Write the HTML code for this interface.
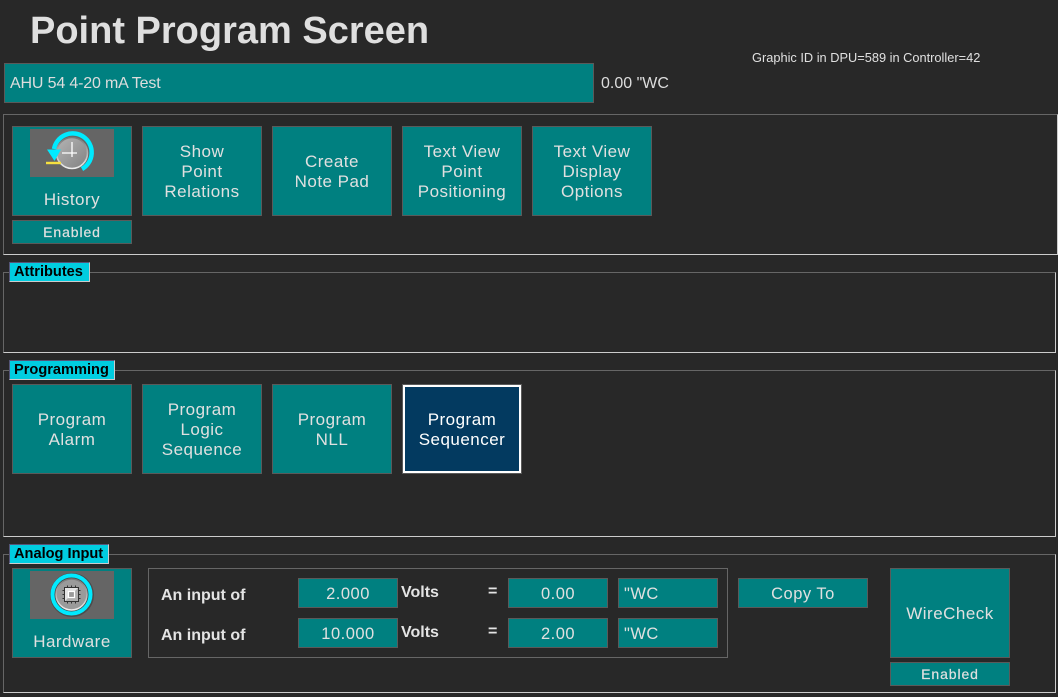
<!DOCTYPE html>
<html><head><meta charset="utf-8"><style>
html,body{margin:0;padding:0;background:#282828;width:1058px;height:697px;overflow:hidden}
body{position:relative;font-family:"Liberation Sans",sans-serif;color:#e0e0e0}
.a{position:absolute;box-sizing:border-box}
.g{border:1px solid #666;border-right-color:#ccc;border-bottom-color:#ccc}
.b{position:absolute;box-sizing:border-box;background:#008080;border:1px solid #5a5a5a;display:flex;align-items:center;justify-content:center;text-align:center;font-size:17px;line-height:20px;letter-spacing:.48px;color:#e0e0e0;padding-top:1px}
.l{position:absolute;box-sizing:border-box;background:#00cde0;border:1px solid #557;border-right-color:#ccc;border-bottom-color:#ccc;color:#000;font-weight:bold;font-size:14.6px;line-height:19px;height:20px;padding-left:4px;white-space:nowrap}
.t{position:absolute;font-weight:bold;font-size:16px;line-height:18px;color:#e4e4e4;white-space:nowrap}
.f{font-size:16.5px;letter-spacing:.5px}
.e{font-size:14px;letter-spacing:.9px;font-weight:normal;padding-top:0;-webkit-text-stroke:.2px #e0e0e0}
</style></head><body>
<div class="a" style="left:30px;top:10px;font-size:38px;line-height:42px;font-weight:bold;color:#dfdfdf;white-space:nowrap">Point Program Screen</div>
<div class="a" style="left:752px;top:50px;font-size:12.8px;line-height:15px;color:#e0e0e0;white-space:nowrap">Graphic ID in DPU=589 in Controller=42</div>
<div class="a" style="left:4px;top:63px;width:590px;height:40px;background:#008080;border:1px solid #5a5a5a;font-size:16px;line-height:40px;letter-spacing:-.16px;padding-left:5px;color:#ddd;white-space:nowrap">AHU 54 4-20 mA Test</div>
<div class="a" style="left:601px;top:74px;font-size:16px;line-height:20px;white-space:nowrap;color:#ddd">0.00 "WC</div>

<div class="a g" style="left:3px;top:114px;width:1055px;height:141px"></div>
<div class="a g" style="left:3px;top:272px;width:1053px;height:81px"></div>
<div class="a g" style="left:3px;top:370px;width:1053px;height:167px"></div>
<div class="a g" style="left:3px;top:554px;width:1053px;height:139px"></div>

<div class="b" style="left:12px;top:126px;width:120px;height:90px;align-items:flex-end;padding-bottom:5px">History</div>
<div class="a" style="left:30px;top:129px;width:84px;height:48px;background:#656565"></div>
<svg class="a" style="left:30px;top:129px" width="84" height="48" viewBox="0 0 84 48">
<defs>
<linearGradient id="m" x1="0" y1="0" x2="1" y2="1"><stop offset="0" stop-color="#b4b4b4"/><stop offset="1" stop-color="#828282"/></linearGradient>
<linearGradient id="r" x1="0" y1="0" x2="0" y2="1"><stop offset="0" stop-color="#777"/><stop offset="1" stop-color="#eee"/></linearGradient>
</defs>
<circle cx="42" cy="24" r="15.500" fill="url(#m)" stroke="url(#r)" stroke-width="1.600"/>
<path d="M24 20 A19 19 0 1 1 52 40" fill="none" stroke="#00eaff" stroke-width="4.500"/>
<path d="M17 20.500 L31 20.500 L24.500 32 Z" fill="#00eaff"/>
<path d="M16 34 H31" stroke="#f5e040" stroke-width="2.400"/>
<path d="M42 13 V28 M32 24 H47" stroke="#fff" stroke-width="1.300"/>
</svg>
<div class="b e" style="left:12px;top:220px;width:120px;height:24px">Enabled</div>
<div class="b" style="left:142px;top:126px;width:120px;height:90px">Show<br>Point<br>Relations</div>
<div class="b" style="left:272px;top:126px;width:120px;height:90px">Create<br>Note Pad</div>
<div class="b" style="left:402px;top:126px;width:120px;height:90px">Text View<br>Point<br>Positioning</div>
<div class="b" style="left:532px;top:126px;width:120px;height:90px">Text View<br>Display<br>Options</div>

<div class="l" style="left:9px;top:262px;width:81px">Attributes</div>
<div class="l" style="left:9px;top:360px;width:106px">Programming</div>
<div class="b" style="left:12px;top:384px;width:120px;height:90px">Program<br>Alarm</div>
<div class="b" style="left:142px;top:384px;width:120px;height:90px">Program<br>Logic<br>Sequence</div>
<div class="b" style="left:272px;top:384px;width:120px;height:90px">Program<br>NLL</div>
<div class="b" style="left:402px;top:384px;width:120px;height:90px;background:#033a60;border:3px solid #fff;outline:1px solid #5a5a5a;outline-offset:-1px;color:#fff">Program<br>Sequencer</div>

<div class="l" style="left:9px;top:544px;width:100px">Analog Input</div>
<div class="b" style="left:12px;top:568px;width:120px;height:90px;align-items:flex-end;padding-bottom:5px">Hardware</div>
<div class="a" style="left:30px;top:571px;width:84px;height:48px;background:#656565"></div>
<svg class="a" style="left:30px;top:571px" width="84" height="48" viewBox="0 0 84 48">
<circle cx="42" cy="24" r="22" fill="#4c4c4c"/>
<circle cx="41.500" cy="23.500" r="19" fill="#444" stroke="#00eaff" stroke-width="4"/>
<circle cx="41.500" cy="23.500" r="15.500" fill="#9a9a9a" stroke="url(#r)" stroke-width="1.500"/>
<path d="M32.500 19.500H50.500M32.500 23.500H50.500M32.500 27.500H50.500M37.500 14.500V32.500M41.500 14.500V32.500M45.500 14.500V32.500" stroke="#333" stroke-width="1"/>
<rect x="34.500" y="16.500" width="14" height="14" fill="#e4e4e4" stroke="#333" stroke-width="1"/>
<path d="M35 30 L48 17 V30 Z" fill="#b0b0b0"/>
<rect x="38.500" y="20.500" width="6" height="6" fill="#999" stroke="#fff" stroke-width="1.200"/>
</svg>

<div class="a" style="left:148px;top:568px;width:580px;height:90px;border:1px solid #666"></div>
<div class="t" style="left:161px;top:587px">An input of</div>
<div class="t" style="left:161px;top:627px">An input of</div>
<div class="t" style="left:401px;top:584px">Volts</div>
<div class="t" style="left:401px;top:624px">Volts</div>
<div class="t" style="left:488px;top:583px">=</div>
<div class="t" style="left:488px;top:623px">=</div>
<div class="b f" style="left:298px;top:578px;width:100px;height:30px">2.000</div>
<div class="b f" style="left:298px;top:618px;width:100px;height:30px">10.000</div>
<div class="b f" style="left:508px;top:578px;width:100px;height:30px">0.00</div>
<div class="b f" style="left:508px;top:618px;width:100px;height:30px">2.00</div>
<div class="b f" style="left:618px;top:578px;width:100px;height:30px;justify-content:flex-start;padding-left:5px">"WC</div>
<div class="b f" style="left:618px;top:618px;width:100px;height:30px;justify-content:flex-start;padding-left:5px">"WC</div>
<div class="b f" style="left:738px;top:578px;width:130px;height:30px">Copy To</div>
<div class="b" style="left:890px;top:568px;width:120px;height:90px">WireCheck</div>
<div class="b e" style="left:890px;top:662px;width:120px;height:24px">Enabled</div>
</body></html>
